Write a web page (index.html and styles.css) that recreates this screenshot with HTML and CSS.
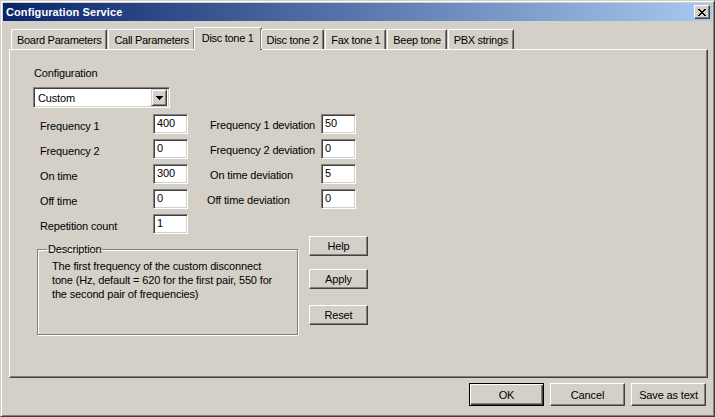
FILE: index.html
```html
<!DOCTYPE html>
<html lang="en">
<head>
    <meta charset="UTF-8">
    <title>Configuration Service</title>
    <link rel="stylesheet" href="styles.css">
</head>
<body>
    <div class="window">
        <div class="titlebar">
            <span class="title">Configuration Service</span>
            <button class="close-btn" title="Close">
                <svg width="8" height="7" viewBox="0 0 8 7" shape-rendering="crispEdges">
                    <path d="M0 0h2v1h-2zM6 0h2v1h-2zM1 1h2v1h-2zM5 1h2v1h-2zM2 2h4v1h-4zM3 3h2v1h-2zM2 4h4v1h-4zM1 5h2v1h-2zM5 5h2v1h-2zM0 6h2v1h-2zM6 6h2v1h-2z" fill="#000"/>
                </svg>
            </button>
        </div>

        <div class="tabs">
            <div class="tab">Board Parameters</div>
            <div class="tab">Call Parameters</div>
            <div class="tab active">Disc tone 1</div>
            <div class="tab">Disc tone 2</div>
            <div class="tab">Fax tone 1</div>
            <div class="tab">Beep tone</div>
            <div class="tab">PBX strings</div>
        </div>

        <div class="panel">
            <div class="config-label">Configuration</div>
            <div class="combo">
                <span class="combo-value">Custom</span>
                <span class="combo-btn">
                    <svg width="7" height="4" viewBox="0 0 7 4" shape-rendering="crispEdges">
                        <path d="M0 0h7v1h-7zM1 1h5v1h-5zM2 2h3v1h-3zM3 3h1v1h-1z" fill="#000"/>
                    </svg>
                </span>
            </div>

            <div class="fields">
                <label class="lbl">Frequency 1</label>
                <input class="field" type="text" value="400">
                <label class="lbl lbl-right">Frequency 1 deviation</label>
                <input class="field" type="text" value="50">

                <label class="lbl">Frequency 2</label>
                <input class="field" type="text" value="0">
                <label class="lbl lbl-right">Frequency 2 deviation</label>
                <input class="field" type="text" value="0">

                <label class="lbl">On time</label>
                <input class="field" type="text" value="300">
                <label class="lbl lbl-right">On time deviation</label>
                <input class="field" type="text" value="5">

                <label class="lbl">Off time</label>
                <input class="field" type="text" value="0">
                <label class="lbl lbl-right lbl-off">Off time deviation</label>
                <input class="field" type="text" value="0">

                <label class="lbl">Repetition count</label>
                <input class="field" type="text" value="1">
            </div>

            <div class="lower">
                <fieldset class="desc">
                    <legend>Description</legend>
                    <p>The first frequency of the custom disconnect<br>
                    tone (Hz, default = 620 for the first pair, 550 for<br>
                    the second pair of frequencies)</p>
                </fieldset>
                <div class="side-buttons">
                    <button class="btn side-btn">Help</button>
                    <button class="btn side-btn apply">Apply</button>
                    <button class="btn side-btn reset">Reset</button>
                </div>
            </div>
        </div>

        <div class="footer">
            <button class="btn foot-btn default">OK</button>
            <button class="btn foot-btn">Cancel</button>
            <button class="btn foot-btn">Save as text</button>
        </div>
    </div>
</body>
</html>
```

FILE: styles.css
```css
* {
    box-sizing: border-box;
}
body {
    margin: 0;
    background: #d4d0c8;
    font-family: 'Liberation Sans', Arial, sans-serif;
    font-size: 11px;
    letter-spacing: -0.15px;
    color: #000;
}
.window {
    width: 715px;
    height: 417px;
    background: #d4d0c8;
    border: 1px solid;
    border-color: #d4d0c8 #404040 #404040 #d4d0c8;
    box-shadow: inset 1px 1px #fff, inset -1px -1px #808080;
    padding: 2px;
}
.titlebar {
    height: 18px;
    background: linear-gradient(to right, #0a246a, #a6caf0);
    display: flex;
    align-items: center;
    justify-content: space-between;
    padding: 0 2px 0 2px;
}
.title {
    color: #fff;
    font-weight: bold;
    font-size: 11px;
    letter-spacing: 0.1px;
    padding-left: 1px;
}
.close-btn {
    width: 16px;
    height: 14px;
    padding: 0;
    background: #d4d0c8;
    border: 1px solid;
    border-color: #fff #404040 #404040 #fff;
    box-shadow: inset -1px -1px #808080;
    display: flex;
    align-items: center;
    justify-content: center;
}

/* tabs */
.tabs {
    display: flex;
    align-items: flex-end;
    height: 28px;
    padding-left: 8px;
    position: relative;
    z-index: 1;
}
.tab {
    height: 20px;
    padding: 4px 5px 0 5px;
    letter-spacing: -0.3px;
    border: 1px solid;
    border-bottom: none;
    border-color: #fff #404040 #404040 #fff;
    box-shadow: inset -1px 0 #808080;
    border-radius: 2px 2px 0 0;
    white-space: nowrap;
    margin-right: 1px;
}
.tab.active {
    height: 23px;
    padding: 4px 7px 0 7px;
    margin: 0 -1px -1px -2px;
    background: #d4d0c8;
}

.panel {
    height: 329px;
    margin: 0 4px 0 6px;
    border: 1px solid;
    border-color: #fff #404040 #404040 #fff;
    box-shadow: inset -1px -1px #808080;
    padding: 17px 0 0 24px;
}
.config-label {
    height: 13px;
    line-height: 13px;
}
.combo {
    width: 137px;
    height: 21px;
    margin: 7px 0 0 -1px;
    background: #fff;
    border: 1px solid;
    border-color: #808080 #fff #fff #808080;
    box-shadow: inset 1px 1px #404040, inset -1px -1px #d4d0c8;
    display: flex;
    align-items: center;
    justify-content: space-between;
    padding: 2px;
}
.combo-value {
    padding-left: 2px;
}
.combo-btn {
    width: 16px;
    height: 17px;
    background: #d4d0c8;
    border: 1px solid;
    border-color: #d4d0c8 #404040 #404040 #d4d0c8;
    box-shadow: inset 1px 1px #fff, inset -1px -1px #808080;
    display: flex;
    align-items: center;
    justify-content: center;
}

/* fields grid */
.fields {
    display: grid;
    grid-template-columns: 113px 35px 133px 35px;
    grid-auto-rows: 20px;
    row-gap: 5px;
    margin: 6px 0 0 6px;
}
.lbl {
    padding-top: 6px;
}
.lbl-right {
    padding-left: 22px;
    padding-top: 5px;
}
.lbl-off {
    padding-left: 19px;
}
.field {
    width: 35px;
    height: 20px;
    font-family: inherit;
    font-size: 11px;
    letter-spacing: inherit;
    padding: 0 0 2px 3px;
    border: 1px solid;
    border-color: #808080 #fff #fff #808080;
    box-shadow: inset 1px 1px #404040, inset -1px -1px #d4d0c8;
    outline: none;
}

/* description + buttons */
.lower {
    display: flex;
    margin-top: 2px;
}
.desc {
    width: 261px;
    height: 92px;
    margin: 7px 0 0 3px;
    padding: 0 4px 0 14px;
    border: 1px solid #808080;
    box-shadow: 1px 1px #fff, inset 1px 1px #fff;
}
.desc legend {
    padding: 0 1px;
    margin-left: -5px;
    line-height: 13px;
}
.desc p {
    margin: 3px 0 0 0;
    line-height: 14px;
    white-space: nowrap;
}
.side-buttons {
    display: flex;
    flex-direction: column;
    margin-left: 11px;
}
.btn {
    font-family: inherit;
    font-size: 11px;
    letter-spacing: inherit;
    color: #000;
    background: #d4d0c8;
    border: 1px solid;
    border-color: #fff #404040 #404040 #fff;
    box-shadow: inset -1px -1px #808080;
    padding: 0;
}
.side-btn {
    width: 59px;
    height: 20px;
}
.apply {
    margin-top: 13px;
}
.reset {
    margin-top: 16px;
}

.footer {
    display: flex;
    justify-content: flex-end;
    gap: 6px;
    padding: 5px 6px 0 0;
}
.foot-btn {
    width: 75px;
    height: 23px;
}
.foot-btn.default {
    border: 1px solid #000;
    box-shadow: inset 1px 1px #fff, inset -1px -1px #404040, inset -2px -2px #808080;
}
```
